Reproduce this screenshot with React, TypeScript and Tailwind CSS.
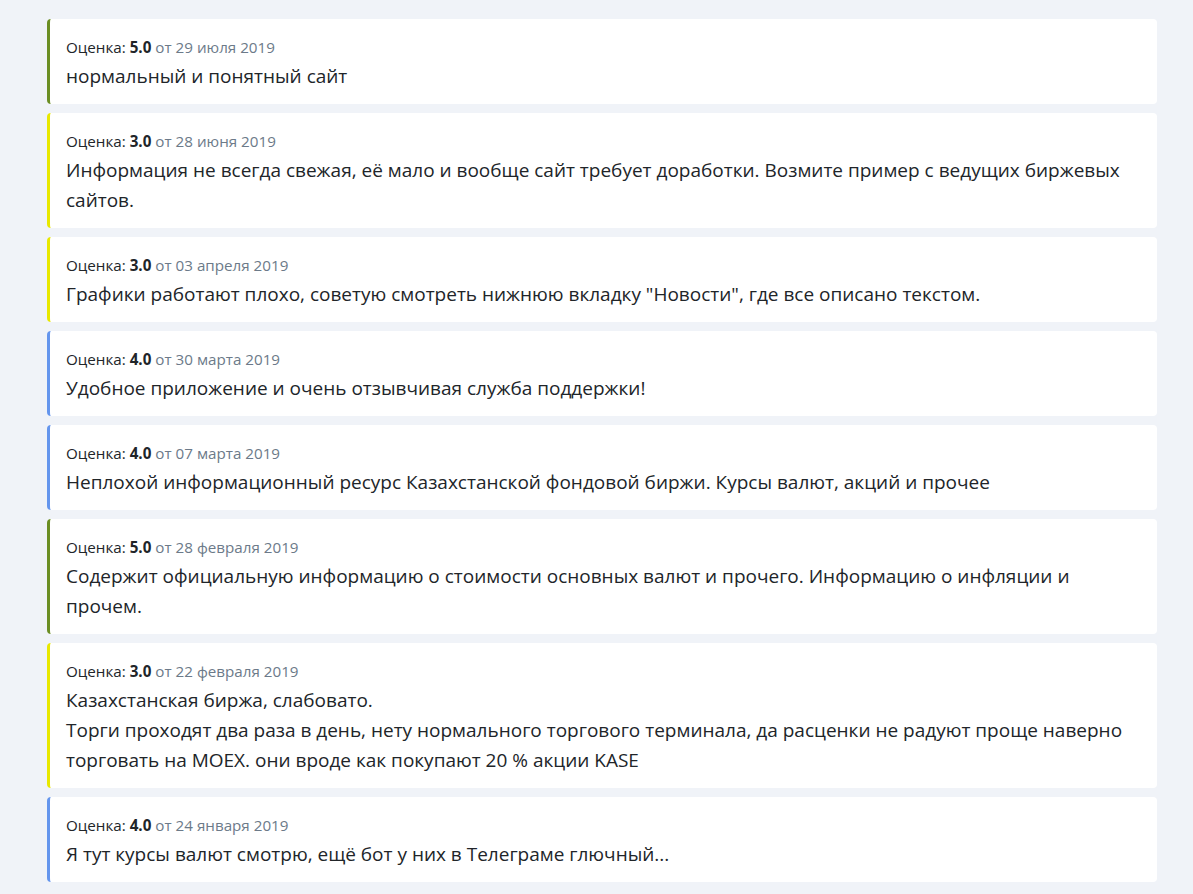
const reviews = [
  { rating: "5.0", date: "от 29 июля 2019", color: "border-[#6b8e23]", lines: ["нормальный и понятный сайт"] },
  {
    rating: "3.0",
    date: "от 28 июня 2019",
    color: "border-[#e8e800]",
    lines: ["Информация не всегда свежая, её мало и вообще сайт требует доработки. Возмите пример с ведущих биржевых сайтов."],
  },
  {
    rating: "3.0",
    date: "от 03 апреля 2019",
    color: "border-[#e8e800]",
    lines: ['Графики работают плохо, советую смотреть нижнюю вкладку "Новости", где все описано текстом.'],
  },
  { rating: "4.0", date: "от 30 марта 2019", color: "border-[#6495ed]", lines: ["Удобное приложение и очень отзывчивая служба поддержки!"] },
  {
    rating: "4.0",
    date: "от 07 марта 2019",
    color: "border-[#6495ed]",
    lines: ["Неплохой информационный ресурс Казахстанской фондовой биржи. Курсы валют, акций и прочее"],
  },
  {
    rating: "5.0",
    date: "от 28 февраля 2019",
    color: "border-[#6b8e23]",
    lines: ["Содержит официальную информацию о стоимости основных валют и прочего. Информацию о инфляции и прочем."],
  },
  {
    rating: "3.0",
    date: "от 22 февраля 2019",
    color: "border-[#e8e800]",
    lines: [
      "Казахстанская биржа, слабовато.",
      "Торги проходят два раза в день, нету нормального торгового терминала, да расценки не радуют проще наверно торговать на MOEX. они вроде как покупают 20 % акции KASE",
    ],
  },
  {
    rating: "4.0",
    date: "от 24 января 2019",
    color: "border-[#6495ed]",
    lines: ["Я тут курсы валют смотрю, ещё бот у них в Телеграме глючный..."],
  },
];

export default function App() {
  return (
    <div
      className="min-h-[894px] bg-[#f0f3f8] pt-[19px] pb-[12px]"
      style={{ fontFamily: '"Open Sans", "Noto Sans", sans-serif' }}
    >
      <div className="ml-[47px] w-[1110px] flex flex-col gap-[9px]">
        {reviews.map((r, i) => (
          <div key={i} className={`bg-white rounded-[4px] border-l-[3px] ${r.color} pl-[16px] pr-[20px] pt-[18px] pb-[13px]`}>
            <div className="text-[15.2px] leading-[20px] text-[#212529]">
              Оценка: <b className="font-bold">{r.rating}</b> <span className="text-[#6c7a89]">{r.date}</span>
            </div>
            <div className="mt-[4px] text-[19px] leading-[30px] text-[#212529]">
              {r.lines.map((l, j) => (
                <p key={j}>{l}</p>
              ))}
            </div>
          </div>
        ))}
      </div>
    </div>
  );
}
